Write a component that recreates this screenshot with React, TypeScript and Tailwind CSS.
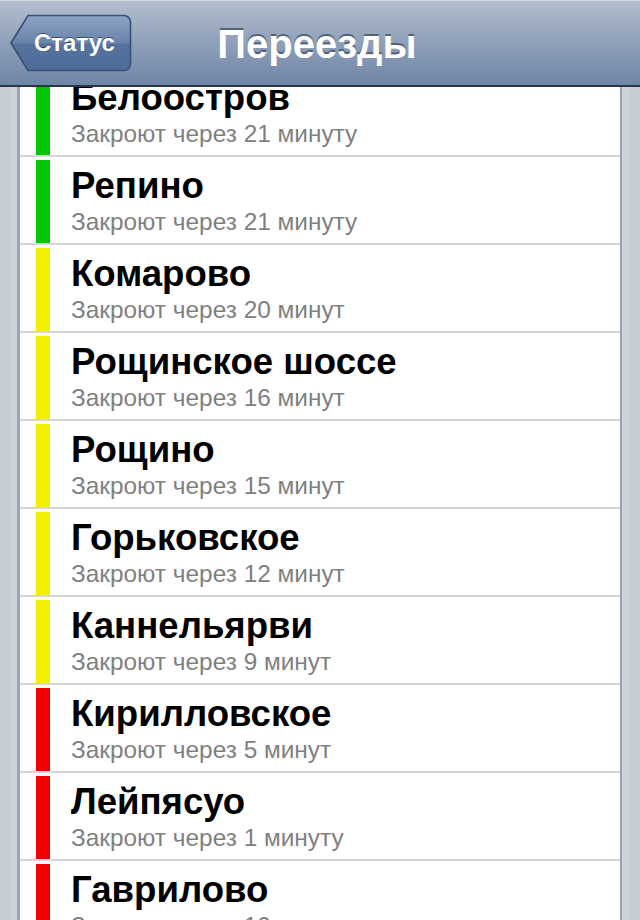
import React from "react";

type Crossing = {
  name: string;
  minutes: string;
  color: string;
};

const crossings: Crossing[] = [
  { name: "Белоостров", minutes: "Закроют через 21 минуту", color: "bg-[#00c800]" },
  { name: "Репино", minutes: "Закроют через 21 минуту", color: "bg-[#00c800]" },
  { name: "Комарово", minutes: "Закроют через 20 минут", color: "bg-[#f0f000]" },
  { name: "Рощинское шоссе", minutes: "Закроют через 16 минут", color: "bg-[#f0f000]" },
  { name: "Рощино", minutes: "Закроют через 15 минут", color: "bg-[#f0f000]" },
  { name: "Горьковское", minutes: "Закроют через 12 минут", color: "bg-[#f0f000]" },
  { name: "Каннельярви", minutes: "Закроют через 9 минут", color: "bg-[#f0f000]" },
  { name: "Кирилловское", minutes: "Закроют через 5 минут", color: "bg-[#f00000]" },
  { name: "Лейпясуо", minutes: "Закроют через 1 минуту", color: "bg-[#f00000]" },
  { name: "Гаврилово", minutes: "Закроют через 10 минут", color: "bg-[#f00000]" },
];

function BackButton() {
  return (
    <button className="relative flex h-[58px] w-[122px] items-center pl-[24px] text-left">
      <svg className="absolute inset-0" width="122" height="58" viewBox="0 0 122 58">
        <defs>
          <linearGradient id="back-fill" x1="0" y1="0" x2="0" y2="1">
            <stop offset="0" stopColor="#8ea4c4" />
            <stop offset="0.5" stopColor="#6883ab" />
            <stop offset="0.52" stopColor="#56739f" />
            <stop offset="1" stopColor="#4e6c9a" />
          </linearGradient>
        </defs>
        <path
          d="M1 29 L18 1.5 H114 A6.5 6.5 0 0 1 120.5 8 V50 A6.5 6.5 0 0 1 114 56.5 H18 Z"
          fill="url(#back-fill)"
          stroke="#3a4f73"
          strokeWidth="1.6"
        />
      </svg>
      <span className="relative text-[24px] font-bold text-white [text-shadow:0_-1px_0_rgba(0,0,0,0.45)]">
        Статус
      </span>
    </button>
  );
}

function NavBar() {
  return (
    <header className="relative flex h-[87px] items-center border-b-2 border-[#2c3642] bg-[linear-gradient(#b4c0d0,#8fa0b9_50%,#6e86a6)] px-[10px] shadow-[inset_0_1px_0_#d2dae4]">
      <BackButton />
      <h1 className="absolute left-0 right-0 top-[14px] pr-[6px] text-center text-[40px] font-bold text-white [text-shadow:0_-2px_0_rgba(40,50,70,0.6)]">
        Переезды
      </h1>
    </header>
  );
}

function Row({ item }: { item: Crossing }) {
  return (
    <li className="flex h-[88px] border-b-2 border-[#d6d6d6] pl-[16px]">
      <div className={`mt-[3px] w-[14px] shrink-0 ${item.color}`} />
      <div className="flex flex-col pl-[21px] pt-[9px]">
        <span className="text-[36.6px] font-bold leading-[40px] text-black">{item.name}</span>
        <span className="text-[24.4px] leading-[31px] text-[#808080]">{item.minutes}</span>
      </div>
    </li>
  );
}

export default function App() {
  return (
    <div
      className="flex h-[920px] w-[640px] flex-col overflow-hidden bg-[#c5ccd4]"
      style={{ fontFamily: '"Liberation Sans", Arial, sans-serif' }}
    >
      <NavBar />
      <div className="flex flex-1 overflow-hidden">
        <div className="flex w-[20px] shrink-0">
          <div className="w-[10px] bg-[#c5ccd4]" />
          <div className="w-[7px] bg-[#ccd3da]" />
          <div className="w-[3px] bg-[#9fa4aa]" />
        </div>
        <div className="flex-1 overflow-hidden bg-white">
          <ul className="mt-[-18px]">
            {crossings.map((c) => (
              <Row key={c.name} item={c} />
            ))}
          </ul>
        </div>
        <div className="flex w-[20px] shrink-0">
          <div className="w-[2px] bg-[#9fa4aa]" />
          <div className="w-[8px] bg-[#ccd3da]" />
          <div className="w-[10px] bg-[#c5ccd4]" />
        </div>
      </div>
    </div>
  );
}
